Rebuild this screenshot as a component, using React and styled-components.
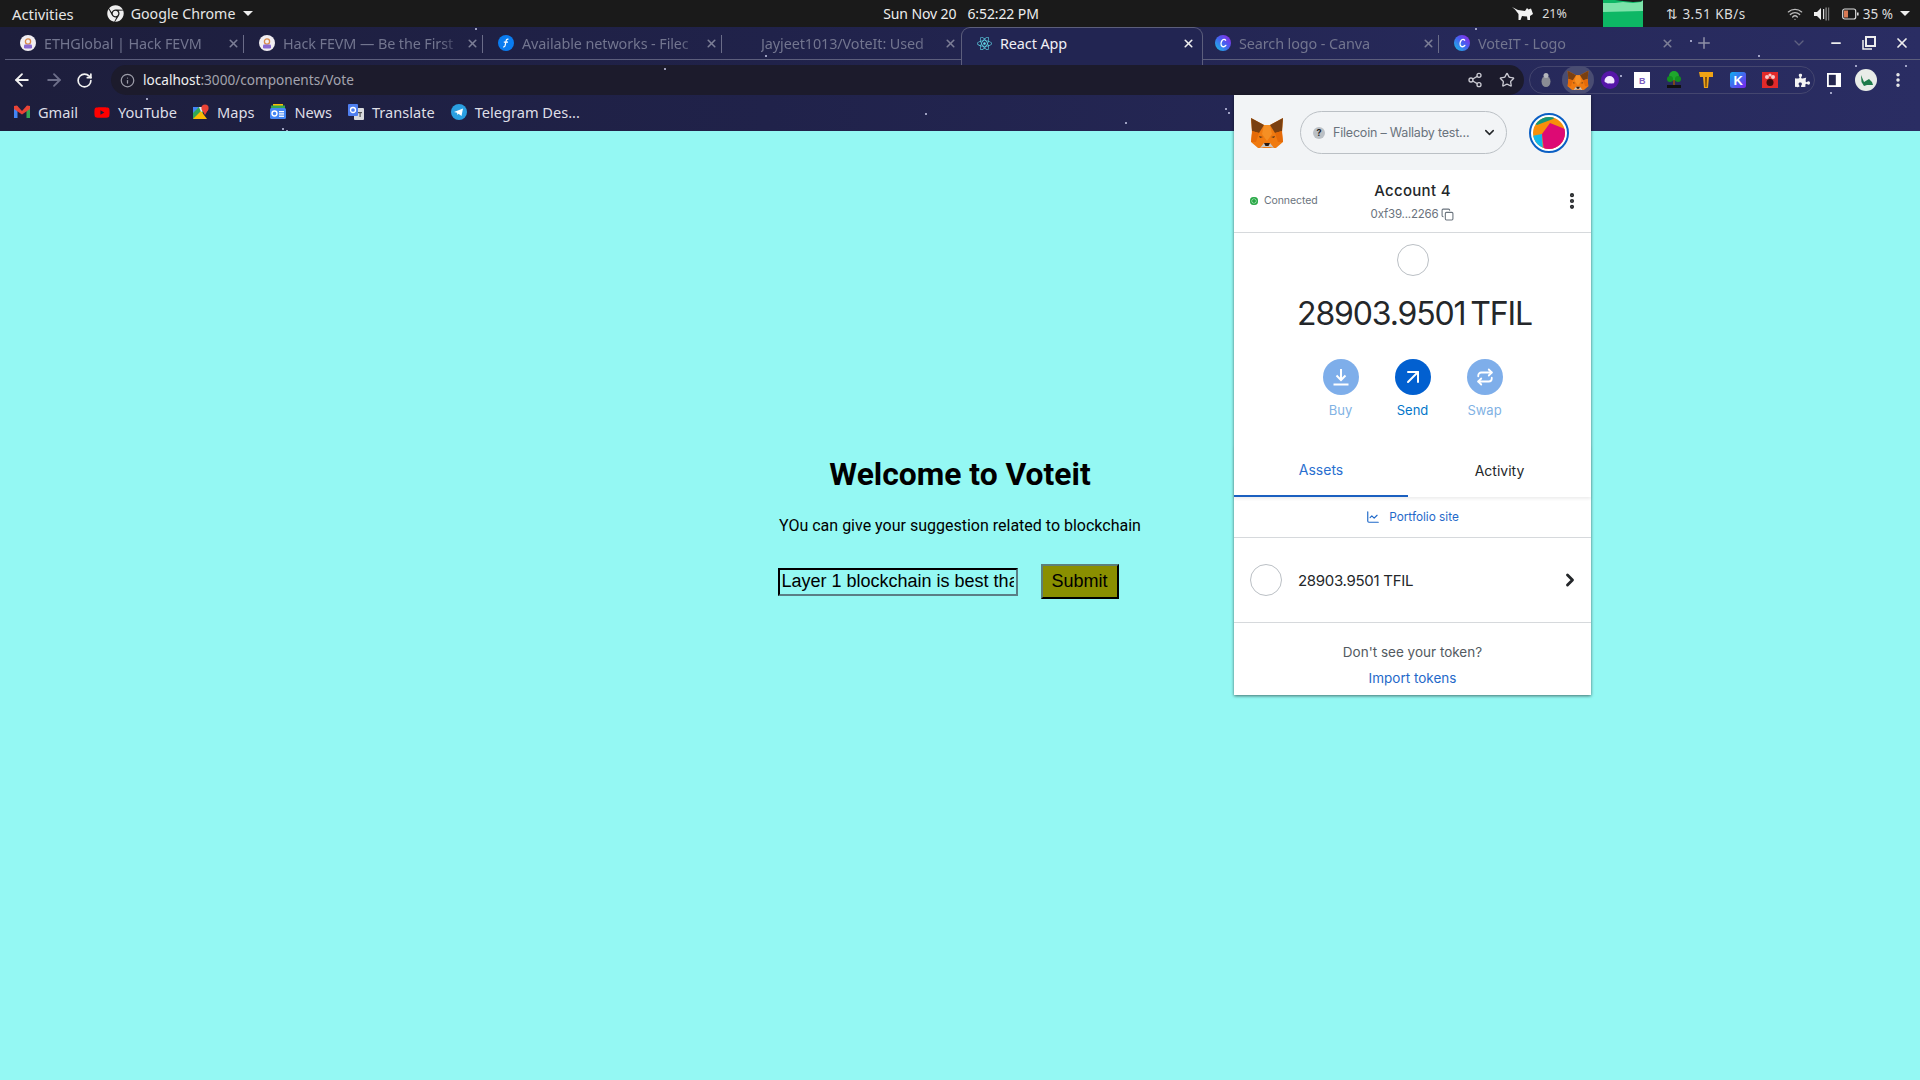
import React from "react";
import styled, { createGlobalStyle } from "styled-components";
import {
  ArrowLeft, ArrowRight, RotateCw, Info, Share2, Star as StarIcon, Plus, X, ChevronDown,
  ChevronRight, Wifi, EllipsisVertical, ArrowUpRight, Repeat, ChartLine, Copy, Minus,
} from "lucide-react";
import { FaChrome, FaPuzzlePiece, FaReact, FaYoutube } from "react-icons/fa";

const Global = createGlobalStyle`
  html, body { margin: 0; padding: 0; background: #94f8f3; }
  #root { width: 1920px; height: 1080px; overflow: hidden; }
  * { box-sizing: border-box; }
`;

const Page = styled.div`
  position: relative; width: 1920px; height: 1080px; display: flex; flex-direction: column;
  background: #94f8f3; font-family: "Noto Sans", sans-serif;
`;

/* ---------- OS top bar ---------- */
const TopBar = styled.div`
  height: 27px; background: #1a1a1a; color: #e6e6e6; font-size: 14.8px; flex: none;
  display: grid; grid-template-columns: 1fr auto 1fr; align-items: center; padding: 0 0 0 12px;
`;
const TopLeft = styled.div`display: flex; align-items: center; gap: 33px;`;
const TopApp = styled.div`display: flex; align-items: center; gap: 7px; font-size: 14.2px;`;
const Caret = styled.span`
  width: 0; height: 0; border-left: 5px solid transparent; border-right: 5px solid transparent;
  border-top: 5px solid #eee; margin-left: 1px;
`;
const Clock = styled.div`display: flex; gap: 11px; font-size: 14px; color: #eee; letter-spacing: -0.1px; margin-right: 10px;`;
const TopRight = styled.div`display: flex; align-items: center; justify-content: flex-end; height: 27px; padding-right: 10px;`;
const Status = styled.span`
  font-size: ${p => p.$fs || 13.5}px; letter-spacing: ${p => p.$ls || 0}px; color: #ddd; margin-left: ${p => p.$ml || 0}px; white-space: nowrap;
`;
const StatusIcon = styled.span`display: flex; margin-left: ${p => p.$ml || 0}px;`;

/* ---------- Browser chrome ---------- */
const Chrome = styled.div`
  position: relative; flex: none; height: 104px; overflow: hidden; display: flex; flex-direction: column;
  background: linear-gradient(90deg, #1d1e3c 0%, #20224a 40%, #2a2d63 100%);
`;
const Strip = styled.div`display: flex; height: 38px; align-items: flex-start; padding-left: 5px; flex: none;`;
const TabBox = styled.div`
  position: relative; width: 239px; flex: none; display: flex; align-items: center; padding: 0 4px 0 15px;
  height: 33px; border-bottom: 1px solid #5c5e7c;
  ${p => p.$active ? `
    width: 242px; margin-right: -3px; z-index: 1; height: 38px; padding: 0 7px 6px 14px; background: #222552;
    border: 1px solid #5c5e7c; border-bottom: none; border-radius: 9px 9px 0 0;
  ` : ""}
  ${p => p.$sep ? `&::after { content: ""; position: absolute; right: 0; top: 8px; height: 18px; width: 1px; background: #6a6c88; }` : ""}
`;
const Fav = styled.span`width: 16px; height: 16px; flex: none; display: flex; align-items: center; justify-content: center;`;
const TabTitle = styled.span`
  flex: 1; margin-left: 8px; font-size: 14.4px; white-space: nowrap; overflow: hidden; letter-spacing: -0.1px;
  color: ${p => (p.$active ? "#f0f0f5" : "#72758f")};
  mask-image: ${p => (p.$active ? "none" : "linear-gradient(90deg, #000 88%, transparent 100%)")};
`;
const TabClose = styled.span`display: flex; margin-left: 4px; color: ${p => (p.$active ? "#eee" : "#7c7e96")};`;
const StripRest = styled.div`
  flex: 1; height: 33px; border-bottom: 1px solid #5c5e7c; display: flex; align-items: center; color: #8b8da5;
  padding-left: 17px;
`;
const NewTab = styled.span`display: flex; color: #8f91a8;`;
const TabSearch = styled.span`display: flex; margin-left: 78px; color: #5f6180;`;
const WinCtl = styled.span`display: flex; margin-left: ${p => p.$ml}px; color: #eee;`;

const Toolbar = styled.div`height: 30px; flex: none; display: flex; align-items: center; padding-left: 12px;`;
const NavBtn = styled.span`display: flex; width: 32px; color: ${p => (p.$off ? "#6d6f8a" : "#f2f2f2")};`;
const Omni = styled.div`
  width: 1413px; margin-left: 3px; height: 30px; background: #1c1b2c; border-radius: 15px; display: flex; align-items: center;
  padding: 0 1px 0 9px; color: #9c9ca8; margin-right: 5px;
`;
const Url = styled.div`flex: 1; margin-left: 8px; font-size: 13.6px; color: #a3a3ae; padding-bottom: 2px;`;
const Host = styled.span`color: #f0f0f0;`;
const OmniBtn = styled.span`display: flex; justify-content: center; width: 32px; color: #c8c8d0;`;
const ExtGroup = styled.div`
  height: 28px; width: 286px; border: 1px solid #44466f; border-radius: 14px; display: flex; align-items: center;
`;
const ExtCell = styled.span`
  width: ${p => p.$w || 32}px; height: 28px; flex: none; display: flex; align-items: center; justify-content: center;
  ${p => p.$on ? "background: #4a4d72; border-radius: 14px;" : ""}
`;
const ToolRest = styled.div`display: flex; align-items: center; color: #eee;`;

const Bookmarks = styled.div`height: 36px; flex: none; display: flex; align-items: center; padding: 0 0 2px 14px; gap: 16px;`;
const Mark = styled.div`display: flex; align-items: center; gap: 8px; font-size: 14.6px; color: #dedee6;`;
const MarkIcon = styled.span`width: 16px; height: 16px; display: flex; align-items: center; justify-content: center;`;
const Dot = styled.span`
  position: absolute; left: ${p => p.$x}px; top: ${p => p.$y}px; width: 2px; height: 2px; border-radius: 50%; background: #c8cbe8;
`;

/* ---------- Page content ---------- */
const Main = styled.main`flex: 1; display: flex; flex-direction: column; align-items: center; padding-top: 325px; font-family: Roboto, sans-serif; color: #000;`;
const Title = styled.h1`margin: 0; font-size: 31.8px; line-height: 37px; font-weight: 700;`;
const Lead = styled.p`margin: 23px 0 0; font-size: 16px; line-height: 19px;`;
const Form = styled.form`display: flex; align-items: center; gap: 23px; margin-top: 29px; margin-right: 24px;`;
const TextInput = styled.input`
  width: 240px; height: 28px; padding: 1px 2px; border: 2px inset #555; background: transparent; color: #000; outline: none;
  font: 18px "Liberation Sans", Arial, sans-serif; border-color: #10232a #5a7f85 #5a7f85 #10232a;
`;
const Submit = styled.button`
  width: 78px; height: 35px; padding: 0; background: #8a8f00; color: #000; border: 2px outset #444;
  border-color: #5e7f78 #16302f #16302f #5e7f78; font: 18px "Liberation Sans", Arial, sans-serif;
`;

/* ---------- MetaMask popup ---------- */
const Popup = styled.div`
  position: absolute; left: 1234px; top: 95px; width: 357px; height: 600px; background: #fff; display: flex; flex-direction: column;
  box-shadow: 0 1px 3px rgba(0,0,0,.55); font-family: Lato, "Noto Sans", sans-serif; color: #24272a;
`;
const PopHead = styled.div`height: 75px; background: #f2f4f6; display: flex; align-items: center; padding-left: 16px; flex: none;`;
const NetPill = styled.div`
  width: 207px; height: 43px; margin-left: 16px; border: 1px solid #bbc0c5; border-radius: 22px; display: flex; align-items: center; padding: 0 9px 0 12px;
  font-size: 13px; color: #6a737d; font-family: Inter, sans-serif;
`;
const NetQ = styled.span`
  width: 12px; height: 12px; border-radius: 50%; background: #bbc0c5; color: #24272a; font-size: 9px; font-weight: 700;
  display: flex; align-items: center; justify-content: center; margin-right: 8px; flex: none;
`;
const NetName = styled.span`flex: 1; white-space: nowrap; letter-spacing: -0.2px; font-size: 12.5px;`;
const AccRow = styled.div`
  position: relative; height: 63px; flex: none; border-bottom: 1px solid #d6d9dc; display: flex; flex-direction: column; align-items: center; padding-top: 11px;
`;
const Connected = styled.div`
  position: absolute; left: 16px; top: 24px; display: flex; align-items: center; gap: 6px; font-size: 10.5px; color: #6a737d; font-family: Inter, sans-serif; letter-spacing: -0.1px;
`;
const GreenDot = styled.span`
  width: 8px; height: 8px; border-radius: 50%; background: #28a745; box-shadow: inset 0 0 0 1.5px #28a745, inset 0 0 0 2px #c7f0d2;
`;
const AccName = styled.div`font-size: 15px; line-height: 19px; font-family: Inter, sans-serif; font-weight: 500; letter-spacing: 0.3px;`;
const Address = styled.div`display: flex; align-items: center; gap: 3px; margin-top: 7px; font-size: 11.5px; color: #6a737d; font-family: Inter, sans-serif; letter-spacing: -0.2px;`;
const Kebab = styled.span`position: absolute; right: 9px; top: 21px; display: flex; color: #24272a;`;
const Overview = styled.div`height: 212px; flex: none; display: flex; flex-direction: column; align-items: center; padding-top: 11px;`;
const TokenRing = styled.div`width: 32px; height: 32px; border-radius: 50%; border: 1px solid #bbc0c5; flex: none;`;
const Balance = styled.div`margin-top: 18px; font-size: 32px; line-height: 40px; font-family: Inter, sans-serif; font-weight: 400; letter-spacing: -1.15px; word-spacing: -3px; padding-left: 4px;`;
const Actions = styled.div`display: flex; gap: 36px; margin-top: 25px;`;
const Action = styled.div`width: 36px; display: flex; flex-direction: column; align-items: center; color: ${p => (p.$on ? "#0376c9" : "#81b2e4")}; font-family: Inter, sans-serif; font-size: 13px;`;
const ActionCircle = styled.span`
  width: 36px; height: 36px; border-radius: 50%; display: flex; align-items: center; justify-content: center; color: #fff;
  background: ${p => (p.$on ? "#0260d0" : "#7eaeea")}; margin-bottom: 7px;
`;
const TabsRow = styled.div`height: 52px; flex: none; display: flex; box-shadow: 0 2px 3px rgba(0,0,0,.07); font-family: Inter, sans-serif; font-size: 14px;`;
const PopTab = styled.div`
  flex: ${p => (p.$on ? "0 0 174px" : 1)}; display: flex; align-items: center; justify-content: center; padding-bottom: 2px;
  color: ${p => (p.$on ? "#2a6fcf" : "#24272a")}; ${p => p.$on ? "border-bottom: 2px solid #1b60c0;" : ""}
`;
const Portfolio = styled.div`
  height: 41px; flex: none; border-bottom: 1px solid #d6d9dc; display: flex; align-items: center; justify-content: center; gap: 9px;
  color: #1f69c9; font-size: 11.8px; font-family: Inter, sans-serif;
`;
const AssetRow = styled.div`height: 85px; flex: none; border-bottom: 1px solid #d6d9dc; display: flex; align-items: center; padding: 0 11px 0 16px;`;
const AssetName = styled.span`flex: 1; margin-left: 16px; font-size: 15px; font-family: Inter, sans-serif; letter-spacing: -0.3px;`;
const Foot = styled.div`flex: 1; display: flex; flex-direction: column; align-items: center; padding-top: 20px; font-family: Inter, sans-serif; font-size: 13.5px;`;
const FootText = styled.div`color: #535a61; line-height: 18px;`;
const FootLink = styled.div`color: #1f69c9; line-height: 18px; margin-top: 8px;`;

/* ---------- Drawn icons ---------- */
const Fox = ({ size = 34 }) => (
  <svg width={size} height={size * 0.94} viewBox="0 0 34 32">
    <polygon points="1,1 14,8 20,8 33,1 32,16 33,25 26,31 8,31 1,25 2,16" fill="#f07a10" />
    <polygon points="1,1 14,8 9,16 2,14" fill="#7a4011" />
    <polygon points="33,1 20,8 25,16 32,14" fill="#7a4011" />
    <polygon points="14,8 20,8 22,17 17,24 12,17" fill="#f58f24" />
    <polygon points="10,31 14,26 20,26 24,31 20,30 14,30" fill="#c9c5c0" />
    <polygon points="14,26 20,26 18.5,29 15.5,29" fill="#2a1a12" />
    <polygon points="2,14 9,16 6,25 1,25" fill="#e56a08" />
    <polygon points="32,14 25,16 28,25 33,25" fill="#e56a08" />
    <polygon points="9,19 13,20 10,21" fill="#5c3a1c" />
    <polygon points="25,19 21,20 24,21" fill="#5c3a1c" />
  </svg>
);
const Avatar = () => (
  <svg width="40" height="40" viewBox="0 0 40 40">
    <circle cx="20" cy="20" r="19" fill="#fff" stroke="#0b5fc4" strokeWidth="2" />
    <clipPath id="av"><circle cx="20" cy="20" r="16" /></clipPath>
    <g clipPath="url(#av)">
      <rect width="40" height="40" fill="#f78f0a" />
      <polygon points="4,10 14,3 28,3 24,6 8,12" fill="#12967a" />
      <polygon points="3,23 13,21 14,38 3,38" fill="#12b8ea" />
      <polygon points="13,21 21,10 36,16 37,38 15,38" fill="#dd0a74" />
    </g>
  </svg>
);
const GmailIcon = () => (
  <svg width="16" height="14" viewBox="0 0 16 14">
    <rect x="0" y="1" width="3.5" height="12" fill="#4285f4" /><rect x="12.5" y="1" width="3.5" height="12" fill="#34a853" />
    <polygon points="0,1 3,0.5 8,6 13,0.5 16,1 16,4 8,9.5 0,4" fill="#ea4335" />
  </svg>
);
const MapsIcon = () => (
  <svg width="16" height="16" viewBox="0 0 16 16">
    <polygon points="0,3 10,3 10,15 0,15" fill="#34a853" /><polygon points="0,15 8,7 14,15" fill="#fbbc04" />
    <polygon points="0,3 6,3 0,9" fill="#4285f4" /><polygon points="6,3 10,3 10,7 8,8" fill="#e8eaed" />
    <circle cx="12" cy="4" r="3.6" fill="#ea4335" /><polygon points="9,6 15,6 12,11" fill="#ea4335" />
  </svg>
);
const NewsIcon = () => (
  <svg width="16" height="16" viewBox="0 0 16 16">
    <rect x="3" y="0" width="10" height="4" fill="#fbbc04" /><rect x="1" y="1.5" width="14" height="4" fill="#34a853" />
    <rect x="0" y="4" width="16" height="11" rx="1.5" fill="#4285f4" />
    <rect x="2" y="7" width="5" height="5" rx="2.4" fill="none" stroke="#fff" strokeWidth="1.4" />
    <rect x="9" y="7" width="5" height="1.3" fill="#fff" /><rect x="9" y="9.3" width="5" height="1.3" fill="#fff" /><rect x="9" y="11.6" width="5" height="1.3" fill="#fff" />
  </svg>
);
const TranslateIcon = () => (
  <svg width="16" height="16" viewBox="0 0 16 16">
    <rect x="6" y="4" width="10" height="12" rx="1" fill="#d9dadd" />
    <rect x="0" y="0" width="10" height="12" rx="1" fill="#4f7ff0" />
    <circle cx="5" cy="6" r="2.5" fill="none" stroke="#fff" strokeWidth="1.3" />
    <rect x="10" y="8" width="4" height="1.2" fill="#555" /><rect x="11.5" y="8" width="1.2" height="5" fill="#555" />
  </svg>
);
const GlobalFav = () => (
  <svg width="16" height="16" viewBox="0 0 16 16">
    <circle cx="8" cy="8" r="8" fill="#f1eef2" />
    <circle cx="8" cy="6.5" r="2.6" fill="none" stroke="#d98a4a" strokeWidth="1.3" />
    <rect x="4" y="9.5" width="8" height="4" rx="1.2" fill="#8a6ad0" />
  </svg>
);
const CanvaIcon = () => (
  <svg width="16" height="16" viewBox="0 0 16 16">
    <defs><linearGradient id="cv" x1="0" y1="1" x2="1" y2="0"><stop offset="0" stopColor="#14c4e4" /><stop offset="0.55" stopColor="#4a5cf0" /><stop offset="1" stopColor="#9a1fe0" /></linearGradient></defs>
    <circle cx="8" cy="8" r="8" fill="url(#cv)" />
    <path d="M10.6 5.2C10 4 8 4 7 5.6S5.6 10 7 11.2s3 .2 3.8-.8" fill="none" stroke="#fff" strokeWidth="1.4" strokeLinecap="round" />
  </svg>
);
const FileIcon = () => (
  <svg width="16" height="16" viewBox="0 0 16 16">
    <circle cx="8" cy="8" r="8" fill="#0a7cf0" />
    <path d="M10.5 4.3C9 3.8 8.3 4.8 8 6.3L7.2 10.2C7 11.6 6.2 12.1 5.2 11.7M5.8 7.2H10" fill="none" stroke="#fff" strokeWidth="1.2" />
  </svg>
);
const CatIcon = () => (
  <svg width="22" height="15" viewBox="0 0 22 15">
    <path d="M0 1 L6 4 L13 5 L15 2 L16.5 3.5 L19 2.5 L21 8 L18 10 L18 14 L15.5 14 L15 10.5 L10 10 L8.5 14 L6.5 14 L6.5 8 L3 3.5Z" fill="#f3f3f3" />
  </svg>
);
const NetChart = () => (
  <svg width="40" height="27" viewBox="0 0 40 27">
    <rect y="0" width="40" height="27" fill="#0db765" />
    <path d="M0 3 L12 3 L20 2 L30 3 L38 2 L40 0 L40 11 L0 12Z" fill="#7de3aa" />
    <path d="M0 0H12L20 1 30 2 38 1.5 40 0V0H0Z" fill="#1a1a1a" />
  </svg>
);
const Battery = () => (
  <svg width="17" height="12" viewBox="0 0 17 12">
    <rect x=".7" y="1" width="13" height="10" rx="2" fill="none" stroke="#ddd" strokeWidth="1.2" />
    <rect x="2" y="2.5" width="4" height="7" fill="#d87a55" /><rect x="15" y="4.5" width="1.6" height="3" fill="#ddd" />
  </svg>
);
const Speaker = () => (
  <svg width="16" height="14" viewBox="0 0 16 14">
    <polygon points="0,5 3,5 7,1 7,13 3,9 0,9" fill="#eee" />
    <rect x="9" y="2" width="1.2" height="10" fill="#ddd" /><rect x="11.5" y="0.5" width="1.2" height="13" fill="#999" /><rect x="14" y="0.5" width="1.2" height="13" fill="#777" />
  </svg>
);
const BuyIcon = () => (
  <svg width="20" height="20" viewBox="0 0 20 20" fill="none" stroke="#fff" strokeWidth="2">
    <path d="M10 2V12.5M5.5 8.5 10 13l4.5-4.5M2.5 17.5H17.5" />
  </svg>
);
const Ghost = () => (
  <svg width="18" height="18" viewBox="0 0 18 18">
    <circle cx="9" cy="9" r="9" fill="#5516a8" />
    <path d="M3.5 10a5 5 0 0 1 10 0c0 1.6-1 3-2 2.2-1 .6-2 .4-2.5 0-1.6.6-3.2.2-3.5-.4-.8-.2-2-.6-2-1.8Z" fill="#f2e8ff" />
  </svg>
);
const BootIcon = () => (
  <svg width="16" height="16" viewBox="0 0 16 16"><rect width="16" height="16" fill="#fff" /><text x="5" y="11.5" fontSize="9" fontWeight="700" fill="#7b5bbf" fontFamily="Liberation Sans">B</text></svg>
);
const TreeIcon = () => (
  <svg width="16" height="18" viewBox="0 0 16 18">
    <circle cx="8" cy="5" r="5" fill="#1ea82c" /><circle cx="4" cy="8" r="3" fill="#12901f" /><circle cx="12" cy="8" r="3" fill="#12901f" />
    <rect x="7" y="9" width="2" height="5" fill="#7b4a1a" /><rect x="1" y="14" width="14" height="3" fill="#111" />
  </svg>
);
const TIcon = () => (
  <svg width="14" height="18" viewBox="0 0 14 18"><path d="M0 1H14V6H10L9 17H5L4 6H1Z" fill="#f0a315" /><path d="M6 6H8L7.6 16H6.4Z" fill="#7a4a08" /></svg>
);
const KIcon = () => (
  <svg width="16" height="16" viewBox="0 0 16 16">
    <defs><linearGradient id="kk" x1="0" y1="0" x2="1" y2="1"><stop offset="0" stopColor="#0fb0f0" /><stop offset="1" stopColor="#7a1ff0" /></linearGradient></defs>
    <rect width="16" height="16" rx="2.5" fill="url(#kk)" />
    <text x="3.5" y="13" fontSize="13" fontWeight="700" fill="#fff" fontFamily="Liberation Sans">K</text>
  </svg>
);
const RedIcon = () => (
  <svg width="16" height="16" viewBox="0 0 16 16">
    <rect width="16" height="16" fill="#e22a2a" /><circle cx="5" cy="5" r="2" fill="#f6c8c8" /><circle cx="11" cy="5" r="2" fill="#f6c8c8" />
    <circle cx="8" cy="3" r="1.6" fill="#f6c8c8" /><ellipse cx="8" cy="10.5" rx="3.5" ry="3.5" fill="#3a0d10" />
  </svg>
);
const Bug = () => (
  <svg width="10" height="14" viewBox="0 0 10 14"><ellipse cx="5" cy="8.5" rx="4.5" ry="5.5" fill="#8a8c94" /><circle cx="5" cy="2.5" r="2.5" fill="#b4b6bc" /></svg>
);
const PanelIcon = () => (
  <svg width="14" height="14" viewBox="0 0 14 14"><rect width="14" height="14" fill="#fff" /><rect x="1.8" y="1.8" width="7" height="10.4" fill="#24264f" /></svg>
);
const Profile = () => (
  <svg width="22" height="22" viewBox="0 0 22 22">
    <circle cx="11" cy="11" r="11" fill="#e8ece8" />
    <path d="M6 6 L9 13 L14 10 L17 13 L18 16 L12 16 L9 17 L6.5 13Z" fill="#1d7a4a" />
  </svg>
);

const tabs = [
  { t: "ETHGlobal | Hack FEVM", icon: <GlobalFav />, sep: true },
  { t: "Hack FEVM — Be the First", icon: <GlobalFav />, sep: true },
  { t: "Available networks - Filec", icon: <FileIcon />, sep: true },
  { t: "Jayjeet1013/VoteIt: Used", icon: null },
  { t: "React App", icon: <FaReact size={15} color="#5fd6e8" />, active: true },
  { t: "Search logo - Canva", icon: <CanvaIcon />, sep: true },
  { t: "VoteIT - Logo", icon: <CanvaIcon /> },
];

const marks = [
  ["Gmail", <GmailIcon />],
  ["YouTube", <FaYoutube size={17} color="#f00" />],
  ["Maps", <MapsIcon />],
  ["News", <NewsIcon />],
  ["Translate", <TranslateIcon />],
];

const stars = [[146,98],[282,128],[286,130],[664,68],[765,55],[925,113],[1125,122],[1225,108],[1228,112],[1123,40],[1475,28],[1690,40],[1758,55],[1855,65],[1830,92],[1905,65],[1620,75],[475,28]];

export default function App() {
  return (
    <Page>
      <Global />
      <TopBar>
        <TopLeft>
          <span>Activities</span>
          <TopApp><FaChrome size={17} color="#eee" /><span>Google Chrome</span><Caret /></TopApp>
        </TopLeft>
        <Clock><span>Sun Nov 20</span><span>6:52:22 PM</span></Clock>
        <TopRight>
          <CatIcon />
          <Status $ml={8} $fs={12.5}>21%</Status>
          <StatusIcon $ml={36}><NetChart /></StatusIcon>
          <Status $ml={23} $ls={0.5}>⇅ 3.51 KB/s</Status>
          <StatusIcon $ml={41}><Wifi size={16} color="#bbb" /></StatusIcon>
          <StatusIcon $ml={11}><Speaker /></StatusIcon>
          <StatusIcon $ml={12}><Battery /></StatusIcon>
          <Status $ml={4}>35 %</Status>
          <StatusIcon $ml={6}><Caret /></StatusIcon>
        </TopRight>
      </TopBar>

      <Chrome>
        {stars.map(([x, y], i) => <Dot key={i} $x={x} $y={y - 27} />)}
        <Strip>
          {tabs.map(t => (
            <TabBox key={t.t} $active={t.active} $sep={t.sep}>
              <Fav>{t.icon}</Fav>
              <TabTitle $active={t.active}>{t.t}</TabTitle>
              <TabClose $active={t.active}><X size={13} strokeWidth={3} /></TabClose>
            </TabBox>
          ))}
          <StripRest>
            <NewTab><Plus size={18} /></NewTab>
            <TabSearch><ChevronDown size={16} /></TabSearch>
            <WinCtl $ml={22}><Minus size={14} strokeWidth={3} /></WinCtl>
            <WinCtl $ml={19}>
              <svg width="14" height="14" viewBox="0 0 14 14" fill="none" stroke="#eee" strokeWidth="2"><rect x="4" y="1" width="9" height="9" /><path d="M1 4V13H10" strokeWidth="1.5" /></svg>
            </WinCtl>
            <WinCtl $ml={18}><X size={16} strokeWidth={2.6} /></WinCtl>
          </StripRest>
        </Strip>
        <Toolbar>
          <NavBtn><ArrowLeft size={20} strokeWidth={2.2} /></NavBtn>
          <NavBtn $off><ArrowRight size={20} strokeWidth={2.2} /></NavBtn>
          <NavBtn><RotateCw size={17} strokeWidth={2.4} /></NavBtn>
          <Omni>
            <Info size={15} />
            <Url><Host>localhost</Host>:3000/components/Vote</Url>
            <OmniBtn><Share2 size={16} /></OmniBtn>
            <OmniBtn><StarIcon size={16} /></OmniBtn>
          </Omni>
          <ExtGroup>
            <ExtCell><Bug /></ExtCell>
            <ExtCell $on><Fox size={22} /></ExtCell>
            <ExtCell><Ghost /></ExtCell>
            <ExtCell><BootIcon /></ExtCell>
            <ExtCell><TreeIcon /></ExtCell>
            <ExtCell><TIcon /></ExtCell>
            <ExtCell><KIcon /></ExtCell>
            <ExtCell><RedIcon /></ExtCell>
            <ExtCell><FaPuzzlePiece size={15} color="#f4f4f4" /></ExtCell>
          </ExtGroup>
          <ToolRest>
            <ExtCell $w={38}><PanelIcon /></ExtCell>
            <ExtCell $w={26}><Profile /></ExtCell>
            <ExtCell $w={38}><EllipsisVertical size={18} strokeWidth={2.6} /></ExtCell>
          </ToolRest>
        </Toolbar>
        <Bookmarks>
          {marks.map(([t, ic]) => <Mark key={t}><MarkIcon>{ic}</MarkIcon>{t}</Mark>)}
          <Mark><MarkIcon><svg width="16" height="16" viewBox="0 0 16 16"><circle cx="8" cy="8" r="8" fill="#2a9fe0" /><path d="M3 8 12 4.5 10.5 12 7.5 9.8 6.5 11 6 8.8Z" fill="#fff" /></svg></MarkIcon>Telegram Des...</Mark>
        </Bookmarks>
      </Chrome>

      <Main>
        <Title>Welcome to Voteit</Title>
        <Lead>YOu can give your suggestion related to blockchain</Lead>
        <Form onSubmit={e => e.preventDefault()}>
          <TextInput readOnly value="Layer 1 blockchain is best than layer 2" />
          <Submit type="button">Submit</Submit>
        </Form>
      </Main>

      <Popup>
        <PopHead>
          <Fox size={34} />
          <NetPill>
            <NetQ>?</NetQ>
            <NetName>Filecoin – Wallaby test...</NetName>
            <ChevronDown size={15} strokeWidth={2.4} color="#24272a" />
          </NetPill>
          <StatusIcon $ml={22}><Avatar /></StatusIcon>
        </PopHead>
        <AccRow>
          <Connected><GreenDot />Connected</Connected>
          <AccName>Account 4</AccName>
          <Address>0xf39...2266 <Copy size={13} color="#6a737d" /></Address>
          <Kebab><EllipsisVertical size={20} strokeWidth={3} /></Kebab>
        </AccRow>
        <Overview>
          <TokenRing />
          <Balance>28903.9501 TFIL</Balance>
          <Actions>
            <Action><ActionCircle><BuyIcon /></ActionCircle>Buy</Action>
            <Action $on><ActionCircle $on><ArrowUpRight size={24} strokeWidth={2} /></ActionCircle>Send</Action>
            <Action><ActionCircle><Repeat size={18} strokeWidth={2.4} /></ActionCircle>Swap</Action>
          </Actions>
        </Overview>
        <TabsRow>
          <PopTab $on>Assets</PopTab>
          <PopTab>Activity</PopTab>
        </TabsRow>
        <Portfolio><ChartLine size={14} strokeWidth={2} />Portfolio site</Portfolio>
        <AssetRow>
          <TokenRing />
          <AssetName>28903.9501 TFIL</AssetName>
          <ChevronRight size={20} strokeWidth={3.4} />
        </AssetRow>
        <Foot>
          <FootText>Don't see your token?</FootText>
          <FootLink>Import tokens</FootLink>
        </Foot>
      </Popup>
    </Page>
  );
}
